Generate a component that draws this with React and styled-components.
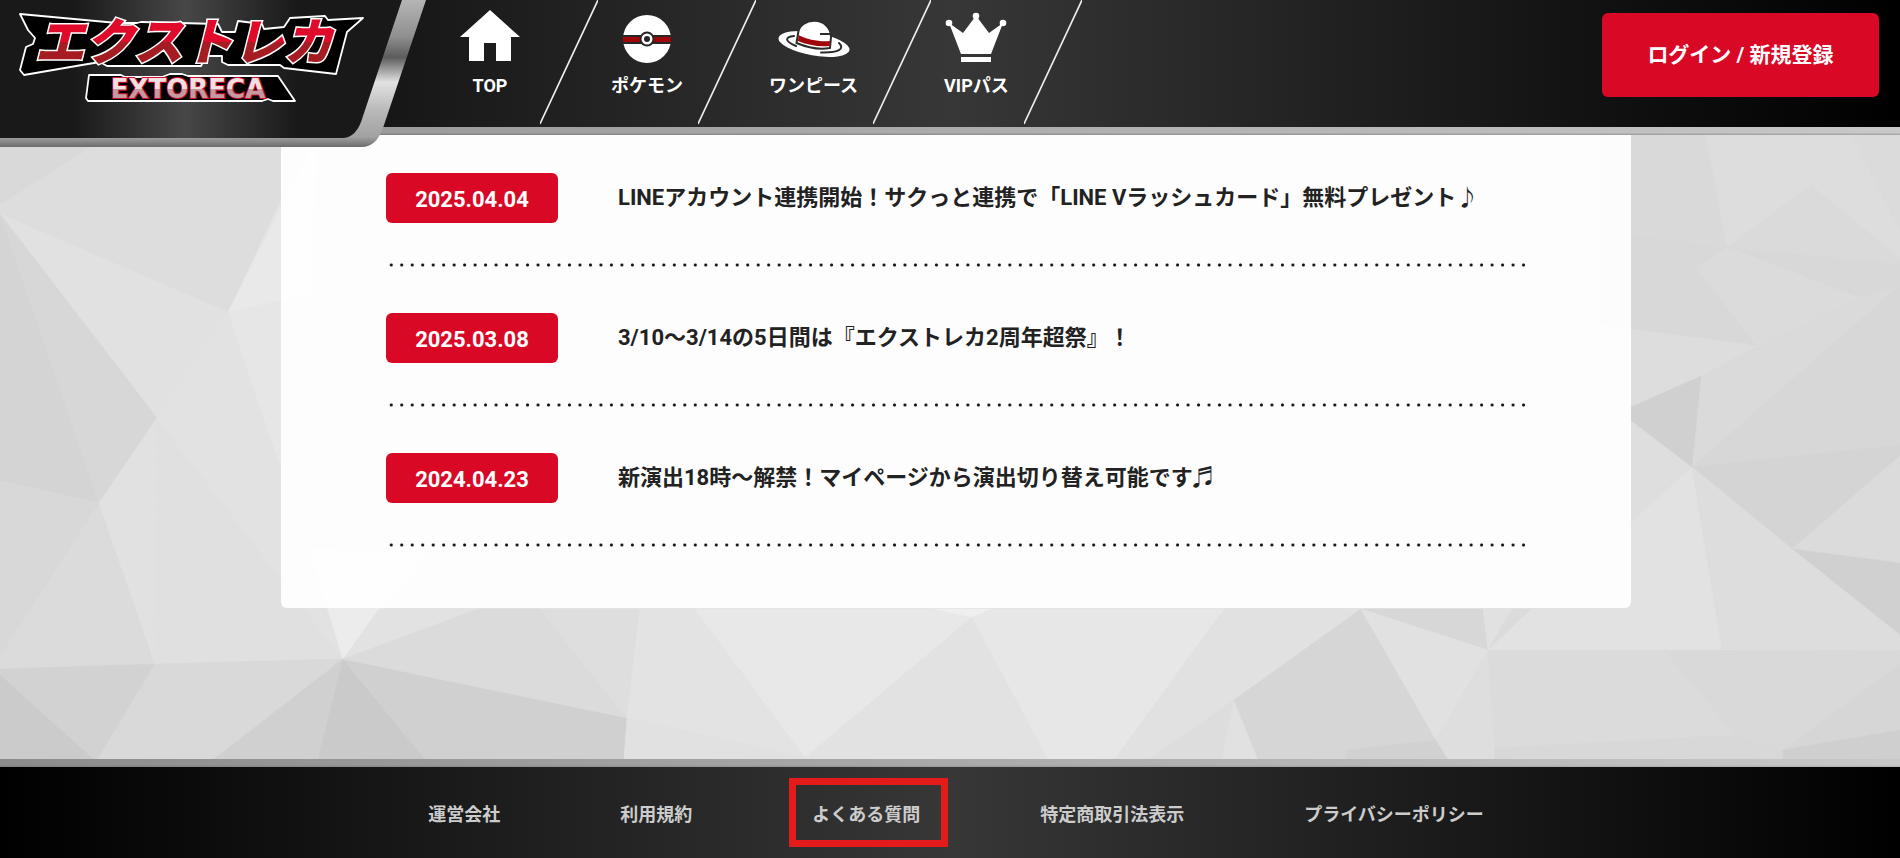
import React from 'react'
import styled, { createGlobalStyle } from 'styled-components'

const news = [
  { date: '2025.04.04', title: 'LINEアカウント連携開始！サクっと連携で「LINE Vラッシュカード」無料プレゼント♪' },
  { date: '2025.03.08', title: '3/10〜3/14の5日間は『エクストレカ2周年超祭』！' },
  { date: '2024.04.23', title: '新演出18時〜解禁！マイページから演出切り替え可能です♬' },
]

const menu = [
  { label: 'TOP', Icon: HomeIcon },
  { label: 'ポケモン', Icon: BallIcon },
  { label: 'ワンピース', Icon: HatIcon },
  { label: 'VIPパス', Icon: CrownIcon },
]

const footerLinks = [
  { label: '運営会社' },
  { label: '利用規約' },
  { label: 'よくある質問', marked: true },
  { label: '特定商取引法表示' },
  { label: 'プライバシーポリシー' },
]

// [fill, points] of every facet in the page background
const facets = [
  ['#dddddd', '0,135 300,135 281,199 228,312 0,214'],
  ['#d9d9d9', '0,135 110,135 0,204'],
  ['#e1e1e1', '0,214 228,312 157,418'],
  ['#d4d4d4', '0,214 99,503 0,481'],
  ['#d7d7d7', '0,214 157,418 99,503'],
  ['#d8d8d8', '0,481 99,503 0,657'],
  ['#dbdbdb', '0,657 99,503 155,664 0,669'],
  ['#e1e1e1', '99,503 157,418 155,664'],
  ['#e0e0e0', '157,418 343,659 155,664'],
  ['#e2e2e2', '157,418 228,312 281,469 343,659'],
  ['#e6e6e6', '228,312 310,294 340,609 327,609 281,469'],
  ['#e9e9e9', '228,312 318,135 310,294'],
  ['#d2d2d2', '0,669 155,664 98,759 93,759 0,675'],
  ['#cbcbcb', '0,675 93,759 0,759'],
  ['#d9d9d9', '155,664 343,659 214,759 98,759'],
  ['#d0d0d0', '343,659 214,759 318,759'],
  ['#cacaca', '343,659 318,759 425,759'],
  ['#d0d0d0', '343,659 627,718 624,759 425,759'],
  ['#ececec', '310,550 430,550 343,659'],
  ['#e2e2e2', '379,609 478,609 343,659'],
  ['#dbdbdb', '343,659 478,609 540,609 627,718'],
  ['#dedede', '540,609 640,609 627,718'],
  ['#e3e3e3', '640,609 695,609 805,757 627,718'],
  ['#e1e1e1', '627,718 805,757 805,759 624,759'],
  ['#e8e8e8', '695,609 970,609 972,617 805,757'],
  ['#e2e2e2', '972,617 1048,759 804,759'],
  ['#e7e7e7', '972,617 990,609 1224,609 1115,759 1048,759'],
  ['#efefef', '935,609 990,609 972,617'],
  ['#e1e1e1', '1224,609 1361,609 1234,700 1150,759 1115,759'],
  ['#dddddd', '1234,700 1222,759 1150,759'],
  ['#e1e1e1', '1234,700 1258,759 1222,759'],
  ['#d6d6d6', '1361,609 1436,740 1347,750 1347,759 1258,759 1234,700'],
  ['#d1d1d1', '1347,750 1436,740 1448,759 1347,759'],
  ['#d7d7d7', '1361,609 1483,609 1488,650'],
  ['#e1e1e1', '1361,609 1488,650 1436,740'],
  ['#dedede', '1488,650 1494,759 1448,759 1436,740'],
  ['#e1e1e1', '1483,609 1512,609 1488,650'],
  ['#dbdbdb', '1512,609 1532,609 1488,650'],
  ['#dbdbdb', '1488,650 1663,650 1735,735 1494,748'],
  ['#d8d8d8', '1494,748 1735,735 1783,750 1783,759 1494,759'],
  ['#d9d9d9', '1663,650 1900,650 1900,664 1783,750 1735,735'],
  ['#d6d6d6', '1900,664 1900,730 1783,750'],
  ['#cfcfcf', '1783,750 1900,730 1900,759 1783,759'],
  ['#e2e2e2', '1692,467 1722,649 1488,650 1532,609 1631,522'],
  ['#dedede', '1600,400 1631,420 1692,467 1631,522 1600,540'],
  ['#d9d9d9', '1600,135 1706,135 1727,247 1600,230'],
  ['#d8d8d8', '1600,230 1727,247 1697,268 1757,346 1600,325'],
  ['#dddddd', '1706,135 1852,135 1900,230 1900,258 1811,185 1727,247'],
  ['#dbdbdb', '1852,135 1900,135 1900,230'],
  ['#dadada', '1727,247 1811,185 1900,258 1900,264'],
  ['#d8d8d8', '1727,247 1900,264 1900,285 1860,298'],
  ['#dbdbdb', '1727,247 1860,298 1757,346 1697,268'],
  ['#dddddd', '1600,325 1757,346 1701,376 1631,410 1600,420'],
  ['#dadada', '1757,346 1860,298 1900,285 1692,467 1701,376'],
  ['#d0d0d0', '1701,376 1692,467 1620,412'],
  ['#d7d7d7', '1692,467 1900,285 1900,445'],
  ['#d4d4d4', '1692,467 1900,445 1900,456 1792,549'],
  ['#dbdbdb', '1792,549 1900,456 1900,563'],
  ['#d0d0d0', '1792,549 1900,563 1900,635'],
  ['#dddddd', '1692,467 1792,549 1900,635 1900,650 1722,649'],
]

function HomeIcon() {
  return (
    <svg width="70" height="70" viewBox="0 0 70 70" aria-hidden="true">
      <path d="M35 10 L5 37 H14 V61 H29 V43 H41 V61 H56 V37 H65 Z" fill="#fff" />
    </svg>
  )
}

function BallIcon() {
  return (
    <svg width="50" height="70" viewBox="0 0 50 70" aria-hidden="true">
      <circle cx="25" cy="39" r="24" fill="#fff" />
      <rect x="0" y="35" width="50" height="9" fill="#262626" />
      <rect x="1" y="37" width="48" height="5" fill="#a0070b" />
      <circle cx="25" cy="39" r="7.500" fill="#262626" />
      <circle cx="25" cy="39" r="5.500" fill="#fff" />
      <circle cx="25" cy="39" r="3" fill="#262626" />
    </svg>
  )
}

function HatIcon() {
  return (
    <svg width="72" height="70" viewBox="0 0 72 70" aria-hidden="true">
      <ellipse cx="36" cy="44" rx="36" ry="11.5" transform="rotate(10 36 44)" fill="#fff" />
      <path d="M16 36 C7 37 6 41 18 46 M61 43 C67 49 61 53 43 52.500" fill="none" stroke="#2c2c2c" strokeWidth="2" strokeLinecap="round" />
      <path d="M20 34 C21 16 53 16 53 37 L52 48 C41 50 28 47 18.500 43 Z" fill="#fff" stroke="#2c2c2c" strokeWidth="2" />
      <path d="M20.500 35 C30 40 42 42 52 41 L51.500 46 C41 47 29 45 20 41 Z" fill="#a0070b" />
      <path d="M42 34 H52" stroke="#2c2c2c" strokeWidth="2" />
    </svg>
  )
}

function CrownIcon() {
  return (
    <svg width="62" height="70" viewBox="0 0 62 70" aria-hidden="true">
      <g fill="#fff">
        <circle cx="4" cy="23" r="3.300" />
        <circle cx="31" cy="16" r="3.300" />
        <circle cx="58" cy="23" r="3.300" />
        <path d="M4 23 L18 33 L30 17 H32 L44 33 L58 23 L46 54 H16 Z" />
        <rect x="16" y="57" width="30" height="5" />
      </g>
    </svg>
  )
}

function Slash() {
  return (
    <svg width="58" height="127" viewBox="0 0 58 127" aria-hidden="true">
      <path d="M58 0 L0 124" stroke="#f0f0f0" strokeWidth="1.600" />
    </svg>
  )
}

function Logo() {
  return (
    <svg width="442" height="147" viewBox="0 0 442 147" role="img" aria-label="エクストレカ EXTORECA">
      <defs>
        <linearGradient id="plate">
          <stop offset="0.180" stopColor="#191919" />
          <stop offset="0.460" stopColor="#474747" />
          <stop offset="0.740" stopColor="#191919" />
        </linearGradient>
        <linearGradient id="metal" x1="0" y1="0" x2="0" y2="1">
          <stop offset="0" stopColor="#b5b5b5" />
          <stop offset="0.250" stopColor="#8f8f8f" />
          <stop offset="0.390" stopColor="#5c5c5c" />
          <stop offset="0.560" stopColor="#e2e2e2" />
          <stop offset="0.750" stopColor="#b9b9b9" />
          <stop offset="0.930" stopColor="#a2a2a2" />
          <stop offset="1" stopColor="#6c6c6c" />
        </linearGradient>
        <linearGradient id="kana" gradientUnits="userSpaceOnUse" x1="0" y1="20" x2="0" y2="64">
          <stop offset="0.500" stopColor="#e00a2a" />
          <stop offset="0.500" stopColor="#a51c22" />
        </linearGradient>
        <linearGradient id="latin" gradientUnits="userSpaceOnUse" x1="0" y1="78" x2="0" y2="98">
          <stop offset="0.550" stopColor="#f2dfe2" />
          <stop offset="0.550" stopColor="#c39a9f" />
        </linearGradient>
      </defs>
      <path d="M0 0 H426 L383 128 Q376 147 362 147 H0 Z" fill="url(#metal)" />
      <path d="M0 0 H402 L363 116 Q357 138 342 138 H0 Z" fill="url(#plate)" />
      <path
        d="M20 14 L117 23 H137 L141 22 L218 24 L222 32 H235 L238 21 L262 24 L264 29 L284 27 L290 18 L325 16 L328 20 L363 18 L347 32 L336 74 L284 68 L280 65 H228 L222 62 V56 H206 L201 66 H107 L100 62 L82 65 L24 75 L20 70 L26 47 L33 44 L35 38 L28 30 Z"
        fill="#000" stroke="#fff" strokeWidth="1.800" strokeLinejoin="round"
      />
      <path
        d="M89 75 H121 L125 77 H162 L170 74 H182 L188 76 H278 L295 101 H273 L268 99 L262 101 H88 L86 98 Z"
        fill="#000" stroke="#fff" strokeWidth="1.800" strokeLinejoin="round"
      />
      <KanaText x="184" y="60">エクストレカ</KanaText>
      <LatinText x="188" y="98">EXTORECA</LatinText>
    </svg>
  )
}

function App() {
  return (
    <Page>
      <GlobalStyle />
      <Header>
        <LogoLink href="#"><Logo /></LogoLink>
        <Menu>
          {menu.map(({ label, Icon }) => (
            <React.Fragment key={label}>
              <MenuLink href="#">
                <Icon />
                <span>{label}</span>
              </MenuLink>
              <Slash />
            </React.Fragment>
          ))}
        </Menu>
        <LoginButton type="button">ログイン / 新規登録</LoginButton>
      </Header>

      <Main>
        <Backdrop viewBox="0 135 1900 624" preserveAspectRatio="xMidYMid slice" aria-hidden="true">
          {facets.map(([fill, points]) => (
            <polygon key={points} points={points} fill={fill} stroke={fill} strokeWidth="0.500" />
          ))}
        </Backdrop>
        <Panel>
          {news.map((item) => (
            <NewsItem key={item.date}>
              <NewsDate>{item.date}</NewsDate>
              <NewsLink href="#">{item.title}</NewsLink>
            </NewsItem>
          ))}
        </Panel>
      </Main>

      <Footer>
        {footerLinks.map((link) => (
          <FooterLink key={link.label} href="#" $marked={link.marked}>{link.label}</FooterLink>
        ))}
      </Footer>
    </Page>
  )
}

export default App

const GlobalStyle = createGlobalStyle`
  * {
    box-sizing: border-box;
  }

  body {
    margin: 0;
    background-color: #000;
    font-family: Roboto, "Noto Sans CJK JP", sans-serif;
    font-weight: 700;
  }

  a {
    color: inherit;
    text-decoration: none;
  }

  svg {
    display: block;
  }
`

const Page = styled.div`
  display: flex;
  flex-direction: column;
  min-height: 100vh;
`

const Header = styled.header`
  position: sticky;
  top: 0;
  z-index: 1;
  display: flex;
  align-items: flex-start;
  color: #fff;
  background:
    linear-gradient(rgba(0,0,0,0) 70%, rgba(0,0,0,.2)) bottom / 100% 8px no-repeat,
    linear-gradient(90deg, #909090, #c8c8c8) bottom / 100% 8px no-repeat,
    linear-gradient(90deg, #000, #373737 50%, #000);
`

const LogoLink = styled.a`
  flex: none;
  margin-bottom: -12px;
`

const Menu = styled.nav`
  display: flex;
  flex: 1;
`

const MenuLink = styled.a`
  display: flex;
  flex-direction: column;
  align-items: center;
  padding: 0 15px 0 13px;
  font-size: 18px;
  line-height: 32px;
  white-space: nowrap;
`

const LoginButton = styled.button`
  flex: none;
  width: 277px;
  height: 84px;
  margin: 13px 21px 0 0;
  padding: 0 0 4px;
  border: 0;
  border-radius: 6px;
  color: #fff;
  background-color: #d90926;
  font: inherit;
  font-size: 21px;
  cursor: pointer;
`

const Main = styled.main`
  position: relative;
  flex: 1;
  padding: 0 269px 149px 281px;
  background-color: #e4e4e4;
`

const Backdrop = styled.svg`
  position: absolute;
  inset: 0;
  width: 100%;
  height: 100%;
`

const Panel = styled.ul`
  position: relative;
  margin: 0;
  padding: 38px 102px 61px 105px;
  border-radius: 0 0 6px 6px;
  background-color: rgba(255,255,255,.92);
  list-style: none;
`

const NewsItem = styled.li`
  display: flex;
  align-items: flex-start;
  gap: 60px;
  padding-bottom: 44px;
  background: radial-gradient(circle, #111 1px, transparent 2px) left bottom / calc(100% / 109) 4px repeat-x;

  & + & {
    padding-top: 46px;
  }
`

const NewsDate = styled.time`
  flex: none;
  width: 172px;
  border-radius: 6px;
  color: #fff;
  background-color: #d90926;
  font-size: 22px;
  line-height: 54px;
  height: 50px;
  text-align: center;
`

const NewsLink = styled.a`
  color: #222;
  font-size: 22px;
  line-height: 50px;
`

const Footer = styled.footer`
  display: flex;
  align-items: center;
  justify-content: center;
  gap: 120px;
  height: 99px;
  padding: 8px 0 0 12px;
  color: #ccc;
  font-size: 18px;
  background:
    linear-gradient(rgba(0,0,0,0) 70%, rgba(0,0,0,.1)) top / 100% 8px no-repeat,
    linear-gradient(90deg, #8c8c8c, #c8c8c8) top / 100% 8px no-repeat,
    linear-gradient(90deg, #000, #373737 50%, #000);
`

const FooterLink = styled.a`
  position: relative;

  &::after {
    content: "";
    display: ${props => props.$marked ? 'block' : 'none'};
    position: absolute;
    inset: -22px -28px -21px -23px;
    border: 7px solid #e41b1b;
  }
`

const KanaText = styled.text`
  font-family: "Noto Sans CJK JP", sans-serif;
  font-size: 50px;
  font-weight: 900;
  font-style: italic;
  text-anchor: middle;
  fill: url(#kana);
  stroke: #fff;
  stroke-width: 3px;
  stroke-linejoin: miter;
  paint-order: stroke;
`

const LatinText = styled.text`
  font-family: "DejaVu Sans", sans-serif;
  font-size: 26px;
  font-weight: 700;
  text-anchor: middle;
  fill: url(#latin);
  stroke: #c8102e;
  stroke-width: 2px;
  paint-order: stroke;
`
